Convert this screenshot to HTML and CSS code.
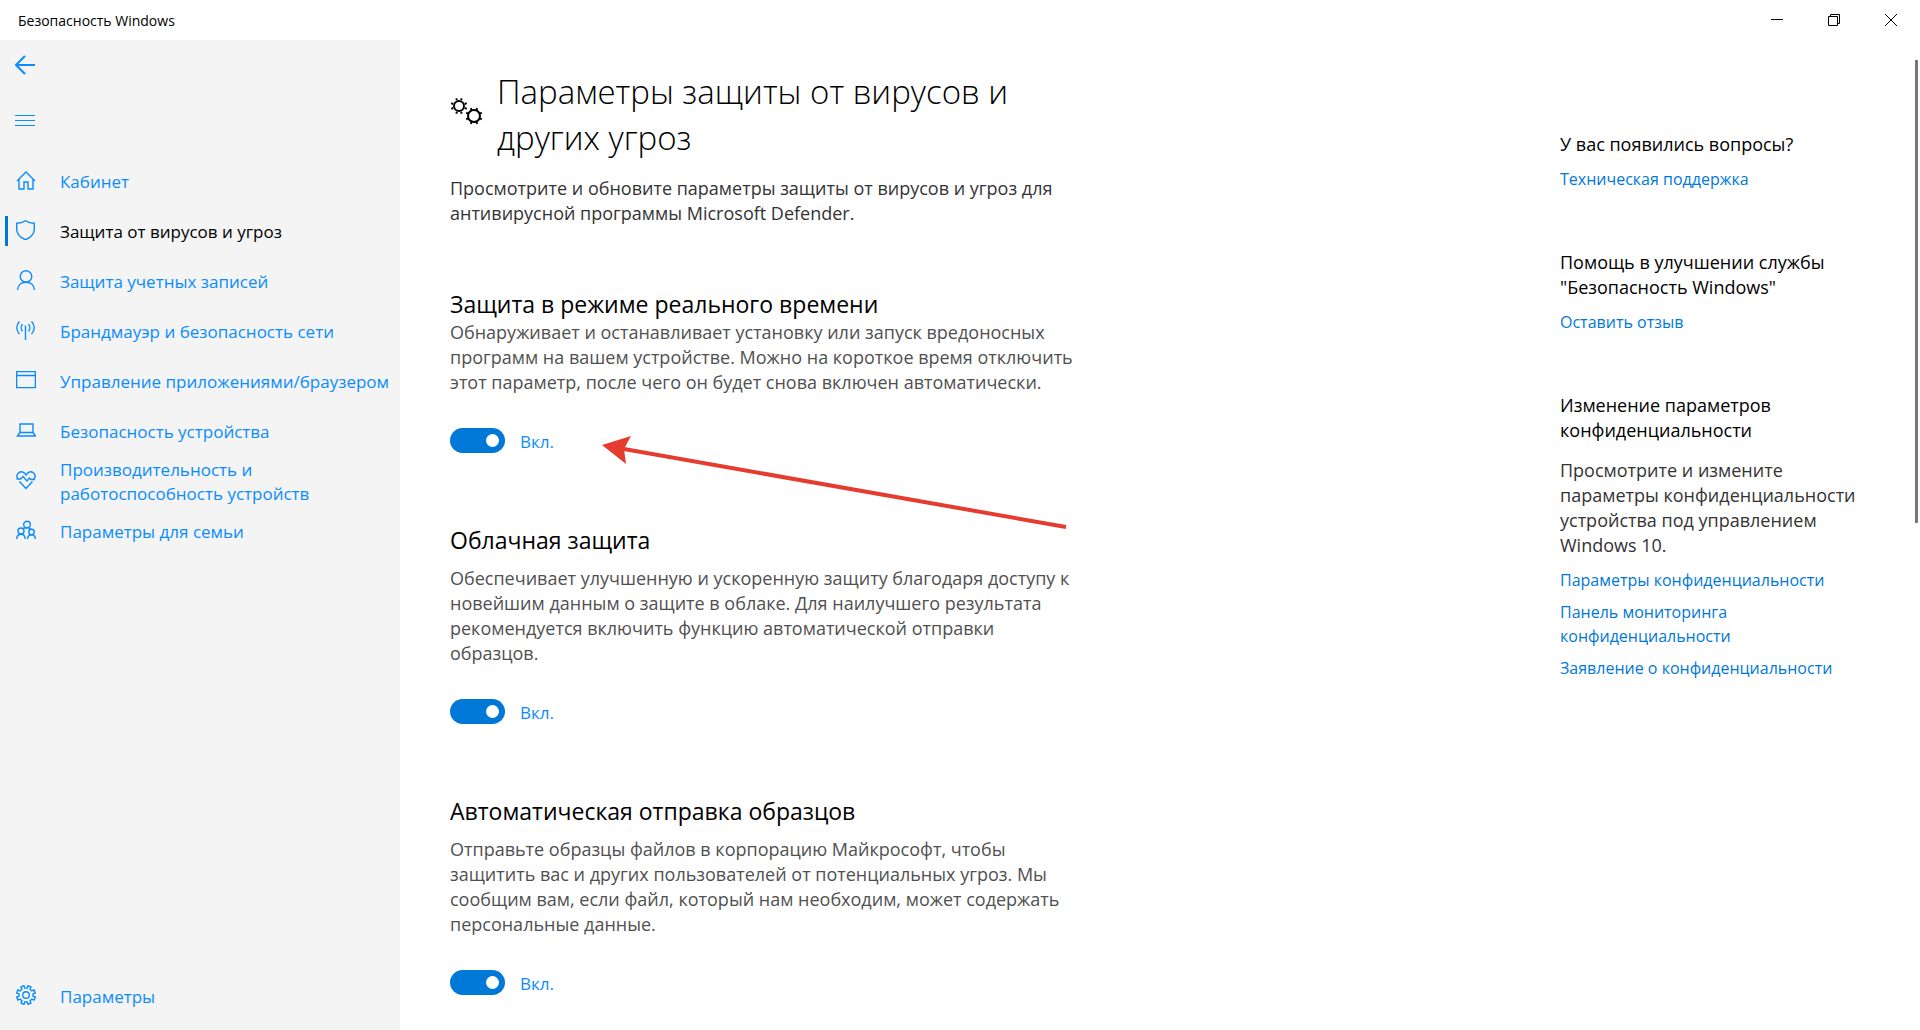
FILE: index.html
```html
<!DOCTYPE html>
<html lang="ru">
<head>
    <meta charset="UTF-8">
    <meta name="viewport" content="width=device-width, initial-scale=1.0">
    <title>Безопасность Windows</title>
    <link rel="stylesheet" href="styles.css">
</head>
<body>
    <header class="titlebar">
        <p class="caption">Безопасность Windows</p>
        <div class="win-btns">
            <button type="button" aria-label="Свернуть">
                <svg width="12" height="12" viewBox="0 0 12 12"><path d="M0 5.5h12"/></svg>
            </button>
            <button type="button" aria-label="Свернуть в окно">
                <svg width="12" height="12" viewBox="0 0 12 12"><path d="M.5 2.5h9v9h-9zM2.5 2.5v-2h9v9h-2"/></svg>
            </button>
            <button type="button" aria-label="Закрыть">
                <svg width="12" height="12" viewBox="0 0 12 12"><path d="M0 0l12 12M12 0L0 12"/></svg>
            </button>
        </div>
    </header>
    <div class="window">
        <nav class="sidebar">
            <button type="button" class="back" aria-label="Назад">
                <svg width="20" height="20" viewBox="0 0 20 20"><path d="M20 10H1M10 1l-9 9 9 9"/></svg>
            </button>
            <button type="button" class="burger" aria-label="Меню">
                <svg width="20" height="20" viewBox="0 0 20 20"><path d="M0 5.5h20M0 10.5h20M0 15.5h20"/></svg>
            </button>
            <ul class="menu">
                <li><a href="#">
                    <svg width="20" height="20" viewBox="0 0 20 20"><path d="M1 11l9-9 9 9M3 9.5V19h5v-7h4v7h5V9.5"/></svg>
                    <span>Кабинет</span>
                </a></li>
                <li class="on"><a href="#">
                    <svg width="20" height="20" viewBox="0 0 20 20"><path d="M9.5.7C7 2.5 4 3.2.7 3.2V9c0 5 3.3 8.5 8.8 10.7C15 17.5 18.300 14 18.300 9V3.200C15 3.200 12 2.500 9.500.7z"/></svg>
                    <span>Защита от вирусов и угроз</span>
                </a></li>
                <li><a href="#">
                    <svg width="20" height="20" viewBox="0 0 20 20"><circle cx="10" cy="6.5" r="5.8"/><path d="M1.5 20c.3-4.700 3.800-7.700 8.500-7.700s8.200 3 8.500 7.700"/></svg>
                    <span>Защита учетных записей</span>
                </a></li>
                <li><a href="#">
                    <svg width="20" height="20" viewBox="0 0 20 20"><path d="M9.5 5.5V20M6.5 4.200c-1.800 2-1.800 5 0 7M12.500 4.200c1.800 2 1.800 5 0 7M3.500 1.500c-3.600 3.700-3.600 8.700 0 12.400M15.500 1.500c3.600 3.700 3.600 8.700 0 12.400"/></svg>
                    <span>Брандмауэр и безопасность сети</span>
                </a></li>
                <li><a href="#">
                    <svg width="20" height="20" viewBox="0 0 20 20"><path d="M.6 1.600h18.800v16H.6zM.6 5.500h18.800"/></svg>
                    <span>Управление приложениями/браузером</span>
                </a></li>
                <li><a href="#">
                    <svg width="20" height="20" viewBox="0 0 20 20"><path d="M4 4h13v8.500H4zM4 12.500L1.500 16h18L17 12.500"/></svg>
                    <span>Безопасность устройства</span>
                </a></li>
                <li><a href="#">
                    <svg width="20" height="20" viewBox="0 0 20 20"><path d="M2 9C-1 5 3 1 6.500 2 8.500 2.500 9.500 4 10 5c.5-1 1.500-2.500 3.500-3C17 1 21 5 18 9M3.500 11.500l6.500 7 6.500-7M.5 9h4l2.500-2.500 4 4.500 2.500-3 1.500 1.500h4"/></svg>
                    <span>Производительность и<br>работоспособность устройств</span>
                </a></li>
                <li><a href="#">
                    <svg width="20" height="20" viewBox="0 0 20 20"><circle cx="11" cy="4.5" r="3.3"/><circle cx="5" cy="11" r="3"/><circle cx="15.5" cy="12" r="2.7"/><path d="M.7 19c.2-3 1.800-4.700 4.300-4.700S9 16 9.300 19M11.500 19c.2-2.600 1.600-4.200 4-4.200s3.700 1.600 3.900 4.200M7 8.500c1-.8 6.500-1 8 .5"/></svg>
                    <span>Параметры для семьи</span>
                </a></li>
            </ul>
            <ul class="menu bottom">
                <li><a href="#">
                    <svg width="20" height="20" viewBox="0 0 20 20"><path d="M8 .7l.7 2.400h2.600L12 .7l3 1.200-1 2.300L15.800 6l2.300-1 1.200 3-2.300.9v2.300l2.300.9-1.200 3-2.300-1-1.800 1.800 1 2.300-3 1.200-.7-2.400H8.700L8 19.400l-3-1.200 1-2.300L4.200 14.100l-2.300 1-1.200-3 2.300-.9V8.900L.7 8l1.200-3 2.300 1L6 4.200 5 1.900z"/><circle cx="10" cy="10" r="3.3"/></svg>
                    <span>Параметры</span>
                </a></li>
            </ul>
        </nav>
        <main class="content">
            <div class="settings">
                <div class="head">
                    <svg width="34" height="34" viewBox="0 0 34 34">
                        <circle cx="9" cy="11" r="5"/>
                        <circle cx="24" cy="21" r="6"/>
                        <path d="M11 5.200l.8-1.900M14.800 9l1.900-.8M14.800 13l1.900.8M11 16.800l.8 1.900M7 16.800l-.8 1.900M3.200 13l-1.900.8M3.200 9l-1.900-.8M7 5.200l-.8-1.900"/>
                        <path d="M26.400 15.200l.8-2M29.800 18.600l2-.8M29.800 23.400l2 .8M26.400 26.800l.8 2M21.600 26.800l-.8 2M18.200 23.400l-2 .8M18.200 18.600l-2-.8M21.600 15.200l-.8-2"/>
                    </svg>
                    <h1>Параметры защиты от вирусов и<br>других угроз</h1>
                </div>
                <p class="intro">Просмотрите и обновите параметры защиты от вирусов и угроз для<br>антивирусной программы Microsoft Defender.</p>
                <section class="realtime">
                    <h2>Защита в режиме реального времени</h2>
                    <p>Обнаруживает и останавливает установку или запуск вредоносных<br>программ на вашем устройстве. Можно на короткое время отключить<br>этот параметр, после чего он будет снова включен автоматически.</p>
                    <label class="switch"><input type="checkbox" role="switch" checked><span>Вкл.</span></label>
                    <svg class="arrow" width="466" height="94" viewBox="0 0 466 94"><path d="M22 13L464 91"/><polygon points="0,9 29,0 22,13 24,28"/></svg>
                </section>
                <section>
                    <h2>Облачная защита</h2>
                    <p>Обеспечивает улучшенную и ускоренную защиту благодаря доступу к<br>новейшим данным о защите в облаке. Для наилучшего результата<br>рекомендуется включить функцию автоматической отправки<br>образцов.</p>
                    <label class="switch"><input type="checkbox" role="switch" checked><span>Вкл.</span></label>
                </section>
                <section>
                    <h2>Автоматическая отправка образцов</h2>
                    <p>Отправьте образцы файлов в корпорацию Майкрософт, чтобы<br>защитить вас и других пользователей от потенциальных угроз. Мы<br>сообщим вам, если файл, который нам необходим, может содержать<br>персональные данные.</p>
                    <label class="switch"><input type="checkbox" role="switch" checked><span>Вкл.</span></label>
                </section>
            </div>
            <aside class="help">
                <div class="block">
                    <h3>У вас появились вопросы?</h3>
                    <a href="#">Техническая поддержка</a>
                </div>
                <div class="block">
                    <h3>Помощь в улучшении службы<br>"Безопасность Windows"</h3>
                    <a href="#">Оставить отзыв</a>
                </div>
                <div class="block">
                    <h3>Изменение параметров<br>конфиденциальности</h3>
                    <p>Просмотрите и измените<br>параметры конфиденциальности<br>устройства под управлением<br>Windows 10.</p>
                    <a href="#">Параметры конфиденциальности</a>
                    <a href="#">Панель мониторинга<br>конфиденциальности</a>
                    <a href="#">Заявление о конфиденциальности</a>
                </div>
            </aside>
            <div class="scrollbar"></div>
        </main>
    </div>
</body>
</html>
```

FILE: styles.css
```css
*{
    margin: 0;
    padding: 0;
    box-sizing: border-box;
    list-style: none;
}
body{
    display: flex;
    flex-direction: column;
    height: 100vh;
    overflow: hidden;
    font-family: "Open Sans", "Noto Sans", sans-serif;
    font-size: 18px;
    line-height: 25px;
    color: #000;
    background: #fff;
}
a{
    color: #0078d7;
    text-decoration: none;
}
button{
    border: 0;
    background: none;
}
svg{
    display: block;
    flex: none;
    fill: none;
    stroke: currentColor;
}

/* title bar */
.titlebar{
    display: flex;
    flex: none;
    justify-content: space-between;
    height: 40px;
    padding: 0 1px 0 18px;
}
.caption{
    font-size: 14px;
    line-height: 41px;
}
.win-btns{
    display: flex;
}
.win-btns button{
    display: flex;
    align-items: center;
    justify-content: center;
    width: 57px;
    height: 40px;
}
.window{
    display: flex;
    flex: 1;
    min-height: 0;
}

/* left menu */
.sidebar{
    display: flex;
    flex: none;
    flex-direction: column;
    width: 400px;
    padding-bottom: 9px;
    background: #f4f4f4;
    color: #0a8cff;
}
.back,
.burger{
    width: 50px;
    height: 50px;
    padding-left: 15px;
    color: #0a8cff;
}
.back svg{
    stroke-width: 2;
}
.burger{
    margin: 5px 0 11px;
}
.menu a{
    display: flex;
    align-items: center;
    gap: 24px;
    height: 50px;
    padding-left: 16px;
    font-size: 17px;
    line-height: 24px;
    color: #0a8cff;
}
.menu span{
    padding-top: 2px;
}
.menu svg{
    margin-bottom: 2px;
    stroke-width: 1.4;
}
.menu .on a{
    padding-left: 7px;
    color: #000;
}
.menu .on a::before{
    content: "";
    width: 3px;
    height: 30px;
    margin: 0 -16px 0 -2px;
    background: #0078d7;
}
.menu .on svg{
    color: #0a8cff;
}
.bottom{
    margin-top: auto;
}

/* settings */
.content{
    display: flex;
    flex: 1;
    justify-content: space-between;
    padding-left: 50px;
    overflow: hidden;
}
.settings{
    width: 640px;
    padding-top: 29px;
}
.head{
    display: flex;
    align-items: center;
    gap: 13px;
}
.head svg{
    margin-bottom: 6px;
    stroke-width: 2;
}
h1{
    font-size: 33px;
    font-weight: 300;
    line-height: 46px;
}
h2{
    font-size: 23px;
    font-weight: 400;
    line-height: 30px;
}
h3{
    font-size: 18px;
    font-weight: 400;
    line-height: 25px;
}
.intro{
    margin: 15px 0 63px;
    color: #333;
}
section{
    margin-bottom: 72px;
}
section p{
    margin: 11px 0 33px;
    color: #505050;
}
.realtime{
    position: relative;
}
.realtime p{
    margin-top: 1px;
}
.switch{
    display: flex;
    align-items: center;
    gap: 15px;
    height: 25px;
    font-size: 17px;
    color: #0a8cff;
}
.switch span{
    padding-top: 2px;
}
.switch input{
    display: flex;
    align-items: center;
    justify-content: flex-end;
    width: 55px;
    height: 25px;
    padding-right: 6px;
    border-radius: 13px;
    background: #0078d7;
    appearance: none;
}
.switch input::before{
    content: "";
    width: 13px;
    height: 13px;
    border-radius: 50%;
    background: #fff;
}
.arrow{
    position: absolute;
    top: 147px;
    left: 152px;
    stroke: #e63c2f;
    stroke-width: 4;
}
.arrow polygon{
    fill: #e63c2f;
    stroke: none;
}

/* right column */
.help{
    width: 330px;
    margin-left: auto;
    padding-top: 92px;
}
.block{
    margin-bottom: 59px;
}
.block p{
    margin-top: 15px;
    color: #333;
}
.block a{
    display: block;
    margin-top: 10px;
    font-size: 16px;
    line-height: 24px;
}
.block a + a{
    margin-top: 8px;
}
.scrollbar{
    width: 3px;
    height: 463px;
    margin: 20px 2px 0 25px;
    background: #777;
}
```
